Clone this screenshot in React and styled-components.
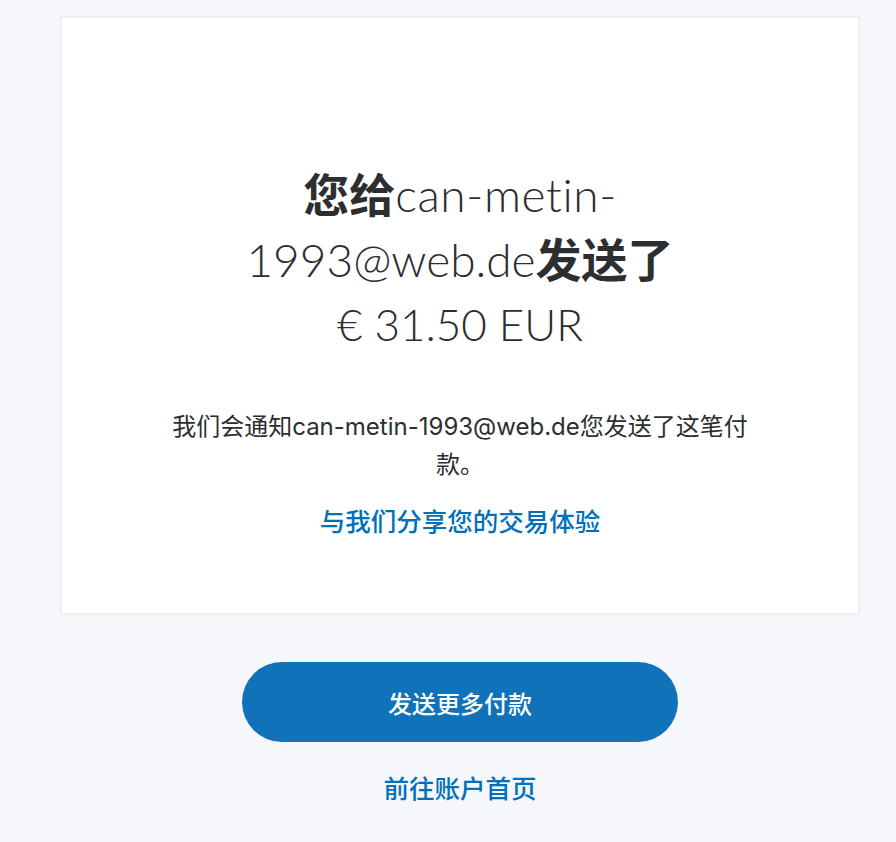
import React from 'react';
import styled, { createGlobalStyle } from 'styled-components';

const GlobalStyle = createGlobalStyle`
  body {
    margin: 0;
    background: #f5f7fa;
    font-family: "Inter", "Noto Sans CJK SC", sans-serif;
    color: #2c2e2f;
  }
`;

const Page = styled.div`
  display: flex;
  flex-direction: column;
  align-items: center;
  padding: 16px 36px 0 60px;
`;

const Card = styled.section`
  box-sizing: border-box;
  width: 800px;
  height: 599px;
  background: #ffffff;
  border: 2px solid #efefef;
  padding: 143px 98px 0;
  display: flex;
  flex-direction: column;
  align-items: center;
  text-align: center;
`;

const Heading = styled.h1`
  margin: 0;
  font-family: "Lato", "Noto Sans CJK SC", sans-serif;
  font-weight: 300;
  font-size: 46px;
  line-height: 62px;
  color: #2c2e2f;
`;

const Latin = styled.span`
  letter-spacing: 0.6px;
`;

const Strong = styled.span`
  font-family: "Noto Sans CJK SC", sans-serif;
  font-weight: 700;
`;

const Amount = styled.span`
  display: block;
  font-size: 44px;
  line-height: 66px;
`;

const Note = styled.p`
  margin: 51px 0 0;
  font-size: 24px;
  line-height: 38px;
  color: #2c2e2f;
`;

const TextLink = styled.a`
  display: block;
  margin-top: ${p => p.$top || 0}px;
  font-size: 25.5px;
  line-height: 38px;
  font-weight: 500;
  color: #0070ba;
  text-decoration: none;
  cursor: pointer;
`;

const PrimaryButton = styled.button`
  margin-top: 47px;
  width: 436px;
  height: 80px;
  border: none;
  border-radius: 40px;
  background: #1072b9;
  color: #ffffff;
  font-family: "Inter", "Noto Sans CJK SC", sans-serif;
  font-size: 24px;
  font-weight: 500;
  cursor: pointer;
`;

export default function App() {
  return (
    <>
      <GlobalStyle />
      <Page>
        <Card>
          <Heading>
            <Strong>您给</Strong><Latin>can-metin-</Latin>
            <br />
            1993@web.de<Strong>发送了</Strong>
            <Amount>€ 31.50 EUR</Amount>
          </Heading>
          <Note>我们会通知can-metin-1993@web.de您发送了这笔付款。</Note>
          <TextLink $top={19}>与我们分享您的交易体验</TextLink>
        </Card>
        <PrimaryButton>发送更多付款</PrimaryButton>
        <TextLink $top={28}>前往账户首页</TextLink>
      </Page>
    </>
  );
}
